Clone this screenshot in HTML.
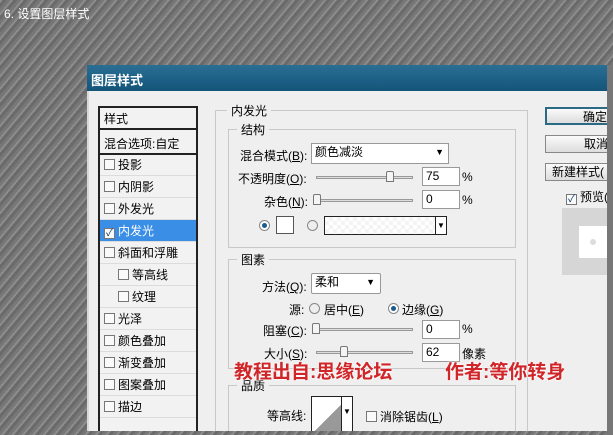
<!DOCTYPE html><html><head><meta charset="utf-8"><style>
*{margin:0;padding:0;box-sizing:border-box}
body{width:613px;height:435px;overflow:hidden;position:relative;font-family:"Liberation Sans","Noto Sans CJK SC",sans-serif;font-size:12px;color:#000;
background:repeating-linear-gradient(-50deg,#6a6a6a 0 3px,#8c8c8c 3px 5px,#777 5px 8px)}
.a{position:absolute}
.dlg{left:87px;top:65px;width:526px;height:366px;background:#efefef;border-left:2px solid #d8d8d8}
.tb{left:87px;top:65px;width:526px;height:26px;background:linear-gradient(#2a6f94,#145579);color:#fff;font-weight:bold;font-size:13px;padding:5px 0 0 4px}
.list{left:98px;top:106px;width:100px;height:325px;background:#f2f2f2;border:2px solid #222;border-bottom:none}
.row{position:absolute;left:0;width:96px;height:22px;line-height:22px;padding-left:4px;border-bottom:1px solid #dcdcdc}
.cb{display:inline-block;width:11px;height:11px;border:1px solid #777;background:#fafafa;vertical-align:-1px;margin-right:3px}
.sel{background:#3a8ee6;color:#fff}
.grp{border:1px solid #c8c8c8;position:absolute}
.lg{position:absolute;background:#efefef;padding:0 4px;font-size:12px}
.in{position:absolute;background:#fff;border:1px solid #999;height:19px;line-height:17px;padding-left:3px}
.sl{position:absolute;height:3px;border:1px solid #999;background:#ddd}
.th{position:absolute;width:8px;height:11px;border:1px solid #777;background:#f4f4f4;border-radius:2px 2px 0 0}
.btn{position:absolute;left:545px;width:72px;height:18px;border:1px solid #888;background:linear-gradient(#fafafa,#ddd);text-align:right;padding-right:8px;line-height:16px}
.rd{position:absolute;width:11px;height:11px;border-radius:50%;border:1px solid #888;background:#eee}
.red{position:absolute;color:#d0262a;font-weight:bold;font-size:19px;text-shadow:0 0 2px #fff,0 0 2px #fff}
</style></head><body>
<div class="a" style="left:4px;top:5px;color:#fff;font-size:12px">6. 设置图层样式</div>
<div class="a dlg"></div>
<div class="a tb">图层样式</div>
<div class="a list">
<div class="row" style="top:0;height:22px;border-bottom:2px solid #222">样式</div>
<div class="row" style="top:25px;border-bottom:2px solid #222">混合选项:自定</div>
<div class="row" style="top:46px"><span class="cb"></span>投影</div>
<div class="row" style="top:68px"><span class="cb"></span>内阴影</div>
<div class="row" style="top:90px"><span class="cb"></span>外发光</div>
<div class="row sel" style="top:112px"><span class="cb" style="text-align:center;line-height:9px;font-size:10px;color:#036">✓</span>内发光</div>
<div class="row" style="top:134px"><span class="cb"></span>斜面和浮雕</div>
<div class="row" style="top:156px;padding-left:18px"><span class="cb"></span>等高线</div>
<div class="row" style="top:178px;padding-left:18px"><span class="cb"></span>纹理</div>
<div class="row" style="top:200px"><span class="cb"></span>光泽</div>
<div class="row" style="top:222px"><span class="cb"></span>颜色叠加</div>
<div class="row" style="top:244px"><span class="cb"></span>渐变叠加</div>
<div class="row" style="top:266px"><span class="cb"></span>图案叠加</div>
<div class="row" style="top:288px"><span class="cb"></span>描边</div>
</div>
<div class="grp" style="left:215px;top:110px;width:313px;height:330px;border-bottom:none;height:321px"></div><div class="lg" style="left:227px;top:102px">内发光</div>
<div class="grp" style="left:228px;top:129px;width:288px;height:119px"></div><div class="lg" style="left:237px;top:121px">结构</div>
<div class="a" style="left:240px;top:147px">混合模式(<u>B</u>):</div>
<div class="in" style="left:311px;top:143px;width:138px;height:21px">颜色减淡<span style="position:absolute;right:4px;top:0;font-size:9px">▼</span></div>
<div class="a" style="left:238px;top:170px">不透明度(<u>O</u>):</div>
<div class="sl" style="left:316px;top:176px;width:97px"></div><div class="th" style="left:386px;top:171px"></div>
<div class="in" style="left:422px;top:167px;width:38px">75</div><div class="a" style="left:462px;top:170px">%</div>
<div class="a" style="left:264px;top:193px">杂色(<u>N</u>):</div>
<div class="sl" style="left:316px;top:199px;width:97px"></div><div class="th" style="left:313px;top:194px"></div>
<div class="in" style="left:422px;top:190px;width:38px">0</div><div class="a" style="left:462px;top:193px">%</div>
<div class="rd" style="left:259px;top:220px;background:#fff"><div style="margin:2px;width:5px;height:5px;border-radius:50%;background:#1d5a8a"></div></div>
<div class="a" style="left:276px;top:216px;width:18px;height:18px;border:1px solid #555;background:#fff"></div>
<div class="rd" style="left:307px;top:220px"></div>
<div class="a" style="left:324px;top:216px;width:123px;height:19px;border:1px solid #222;background:repeating-conic-gradient(#f4f4f4 0 25%,#fff 0 50%) 0 0/8px 8px"><span style="position:absolute;right:0;top:0;width:11px;height:17px;border-left:1px solid #222;background:#fff;font-size:8px;text-align:center;line-height:17px">▼</span></div>
<div class="grp" style="left:228px;top:259px;width:288px;height:110px"></div><div class="lg" style="left:237px;top:251px">图素</div>
<div class="a" style="left:262px;top:278px">方法(<u>Q</u>):</div>
<div class="in" style="left:311px;top:273px;width:70px;height:21px;border-radius:2px">柔和<span style="position:absolute;right:5px;top:0;font-size:9px">▼</span></div>
<div class="a" style="left:289px;top:301px">源:</div>
<div class="rd" style="left:309px;top:303px"></div><div class="a" style="left:324px;top:301px">居中(<u>E</u>)</div>
<div class="rd" style="left:388px;top:303px;background:#fff"><div style="margin:2px;width:5px;height:5px;border-radius:50%;background:#1d5a8a"></div></div><div class="a" style="left:402px;top:301px">边缘(<u>G</u>)</div>
<div class="a" style="left:263px;top:322px">阻塞(<u>C</u>):</div>
<div class="sl" style="left:316px;top:328px;width:97px"></div><div class="th" style="left:312px;top:323px"></div>
<div class="in" style="left:422px;top:320px;width:38px">0</div><div class="a" style="left:462px;top:322px">%</div>
<div class="a" style="left:264px;top:345px">大小(<u>S</u>):</div>
<div class="sl" style="left:316px;top:351px;width:97px"></div><div class="th" style="left:340px;top:346px"></div>
<div class="in" style="left:422px;top:343px;width:38px">62</div><div class="a" style="left:462px;top:345px">像素</div>
<div class="grp" style="left:228px;top:385px;width:288px;height:46px;border-bottom:none"></div><div class="lg" style="left:237px;top:377px">品质</div>
<div class="a" style="left:267px;top:407px">等高线:</div>
<div class="a" style="left:311px;top:396px;width:42px;height:35px;border:1px solid #222;border-bottom:none;background:linear-gradient(135deg,#fff 50%,#999 50%)"><span style="position:absolute;right:0;top:0;width:11px;height:34px;border-left:1px solid #222;background:#fff;font-size:8px;text-align:center;line-height:30px">▼</span></div>
<div class="a" style="left:366px;top:408px"><span class="cb"></span>消除锯齿(<u>L</u>)</div>
<div class="red" style="left:234px;top:357px">教程出自:思缘论坛</div>
<div class="red" style="left:445px;top:357px">作者:等你转身</div>
<div class="btn" style="top:107px;border:2px solid #2a6a84">确定</div>
<div class="btn" style="top:135px">取消</div>
<div class="btn" style="top:163px;text-align:left;padding-left:6px">新建样式(</div>
<div class="a" style="left:566px;top:188px"><span class="cb" style="text-align:center;line-height:9px;font-size:10px;color:#036">✓</span>预览(</div>
<div class="a" style="left:562px;top:208px;width:60px;height:67px;background:#d6d6d6"><div style="margin:18px 0 0 17px;width:50px;height:32px;background:#fff"><div style="position:absolute;left:28px;top:31px;width:6px;height:6px;border-radius:50%;background:#ddd"></div></div></div>
<div class="a" style="left:607px;top:65px;width:6px;height:370px;background:#777"></div>
</body></html>
